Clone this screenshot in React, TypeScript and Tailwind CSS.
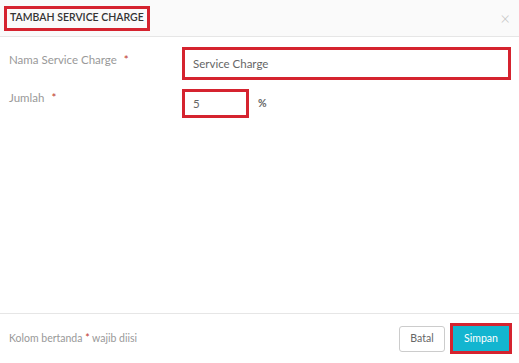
import React from 'react';

const font = { fontFamily: 'Lato, "Noto Sans", sans-serif' };

const Required: React.FC = () => <span className="ml-[7px] text-[#c0392b]">*</span>;

const App: React.FC = () => {
  return (
    <div className="flex h-[363px] w-[519px] flex-col bg-white text-[11.5px]" style={font}>
      {/* Header */}
      <div className="flex h-[37px] items-center justify-between border-b border-[#e6e6e6] bg-[#fafafa] pl-[4px] pr-[9px]">
        <div className="flex h-[25px] items-center whitespace-nowrap border-[3px] border-[#d5232f] px-[3px] text-[10.5px] font-semibold text-[#333]">
          TAMBAH SERVICE CHARGE
        </div>
        <button className="text-[17px] font-light leading-none text-[#c4c4c4]">×</button>
      </div>

      {/* Body */}
      <div className="flex flex-1 flex-col pl-[9px] pr-[8px] pt-[10px]">
        <div className="flex items-start">
          <label className="w-[173px] pt-[4px] text-[#999]">
            Nama Service Charge<Required />
          </label>
          <input
            readOnly
            value="Service Charge"
            className="h-[33px] flex-1 border-[3px] border-[#d5232f] px-[8px] text-[11.5px] text-[#666] outline-none"
          />
        </div>
        <div className="mt-[9px] flex items-center">
          <label className="-mt-[4px] w-[173px] self-start pt-[4px] text-[#999]">
            Jumlah<Required />
          </label>
          <input
            readOnly
            value="5"
            className="h-[29px] w-[67px] border-[3px] border-[#d5232f] px-[8px] text-[11.5px] text-[#666] outline-none"
          />
          <span className="ml-[9px] text-[10.5px] font-bold text-[#666]">%</span>
        </div>
      </div>

      {/* Footer */}
      <div className="flex h-[50px] items-center justify-between border-t border-[#e6e6e6] pl-[9px] pr-[7px]">
        <span className="text-[10.5px] text-[#999]">
          Kolom bertanda <span className="text-[#c0392b]">*</span> wajib diisi
        </span>
        <div className="flex items-center gap-[5px]">
          <button className="h-[26px] w-[46px] rounded-[3px] border border-[#ccc] bg-white text-[10.5px] text-[#666]">
            Batal
          </button>
          <button className="h-[31px] w-[62px] border-[3px] border-[#d5232f] bg-[#13b5d0] text-[10.5px] text-white">
            Simpan
          </button>
        </div>
      </div>
    </div>
  );
};

export default App;
